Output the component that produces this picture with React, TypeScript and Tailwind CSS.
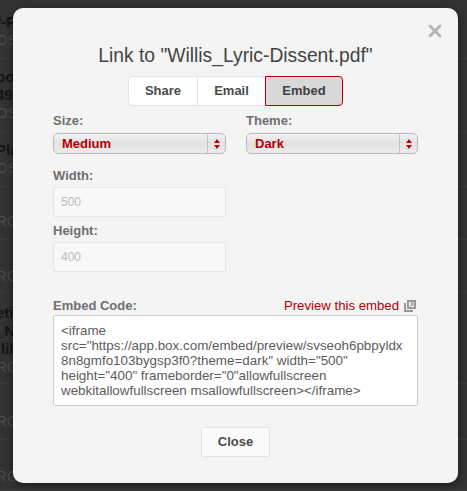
import { X } from "lucide-react";

const rows = [
  { box: "h-[59px] pb-[9px]", lines: ["f-P", "OS"], dark: [true, false] },
  { box: "h-[73px] pb-[9px]", lines: ["oo", "49", "OS"], dark: [true, true, false] },
  { box: "h-[55px] pb-[9px]", lines: ["Pla", "OS"], dark: [true, false] },
  { box: "h-[53px] pb-[9px]", lines: ["RO"], dark: [false] },
  { box: "h-[53px] pb-[7px]", lines: ["RO"], dark: [false] },
  { box: "h-[91px] pb-[7px]", lines: ["eti", "_N", "-lil", "RO"], dark: [true, true, true, false] },
  { box: "h-[56px] pb-[9px]", lines: ["RO"], dark: [false] },
  { box: "h-[51px] pb-[5px]", lines: ["RO"], dark: [false] },
];

function SelectBox({ value }: { value: string }) {
  return (
    <div className="flex h-[21px] w-full items-stretch rounded-[5px] border border-[#b9b9b9] bg-gradient-to-b from-[#f2f2f2] via-[#e2e2e2] to-[#ececec]">
      <span className="flex-1 pl-2 text-[13px] font-bold leading-[19px] text-[#b20000]">{value}</span>
      <span className="flex w-[18px] flex-col items-center justify-center gap-[2px] border-l border-[#c4c4c4]">
        <span className="h-0 w-0 border-x-[3px] border-b-[4px] border-x-transparent border-b-[#b20000]" />
        <span className="h-0 w-0 border-x-[3px] border-t-[4px] border-x-transparent border-t-[#b20000]" />
      </span>
    </div>
  );
}

function NumberField({ label, value }: { label: string; value: string }) {
  return (
    <div className="w-[173px]">
      <div className="text-[13px] font-bold leading-[17px] text-[#6f6f6f]">{label}</div>
      <div className="mt-[3px] h-[30px] rounded-[2px] border border-[#e6e6e6] bg-[#f8f8f8] pl-[7px] text-[12px] leading-[28px] text-[#bbbbbb]">
        {value}
      </div>
    </div>
  );
}

export default function App() {
  return (
    <div
      className="relative h-[491px] w-[467px] overflow-hidden bg-[#333333]"
      style={{ fontFamily: '"Liberation Sans", Arial, sans-serif' }}
    >
      {/* page behind the overlay */}
      <div className="flex flex-col">
        {rows.map((row, i) => (
          <div
            key={i}
            className={`flex flex-col justify-end border-b border-[#3b3b3b] text-[15px] leading-[18px] ${row.box}`}
          >
            {row.lines.map((line, j) => (
              <span key={j} className={row.dark[j] ? "-ml-1 font-bold text-[#151515]" : "-ml-1 text-[#4c4c4c]"}>
                {line}
              </span>
            ))}
          </div>
        ))}
      </div>

      {/* modal */}
      <div className="absolute left-[13px] top-[8px] flex h-[475px] w-[445px] flex-col rounded-[10px] bg-[#f4f4f4] px-10 shadow-[0_2px_8px_rgba(0,0,0,0.5)]">
        <button className="absolute right-[13px] top-[13px] text-[#b4b4b4]">
          <X size={20} strokeWidth={3.4} />
        </button>

        <h1 className="mt-[37px] whitespace-nowrap text-center text-[19.3px] leading-[22px] text-[#444444]">
          Link to "Willis_Lyric-Dissent.pdf"
        </h1>

        <div className="mt-[9px] flex h-[30px] justify-center text-[13px] font-bold leading-[28px] text-[#4a4a4a]">
          <div className="w-[70px] rounded-l-[4px] border border-[#e4e4e4] bg-white text-center">Share</div>
          <div className="w-[67px] border-y border-[#e4e4e4] bg-white text-center">Email</div>
          <div className="w-[78px] rounded-r-[4px] border border-[#b20000] bg-[#d8d8d8] text-center text-[#3f3f3f]">Embed</div>
        </div>

        <div className="mt-[6px] flex gap-5">
          <div className="w-[173px]">
            <div className="text-[13px] font-bold leading-[17px] text-[#6f6f6f]">Size:</div>
            <div className="mt-[4px]">
              <SelectBox value="Medium" />
            </div>
          </div>
          <div className="w-[172px]">
            <div className="text-[13px] font-bold leading-[17px] text-[#6f6f6f]">Theme:</div>
            <div className="mt-[4px]">
              <SelectBox value="Dark" />
            </div>
          </div>
        </div>

        <div className="mt-[13px] flex flex-col gap-[5px]">
          <NumberField label="Width:" value="500" />
          <NumberField label="Height:" value="400" />
        </div>

        <div className="mt-[25px] flex items-end justify-between">
          <div className="text-[13px] font-bold leading-[17px] text-[#6f6f6f]">Embed Code:</div>
          <div className="flex items-center gap-[5px] pr-[2px] text-[13.2px] leading-[17px] text-[#b20000]">
            Preview this embed
            <svg width="12" height="12" viewBox="0 0 12 12" className="text-[#999999]">
              <path d="M3 0h9v9H3zM5 2v5h5V2z" fill="currentColor" fillRule="evenodd" />
              <path d="M0 3h2v7h7v2H0z" fill="currentColor" />
              <path d="M6 2.500h3.500V6L8.400 4.900 6.600 6.700 5.800 5.900 7.600 4.100z" fill="currentColor" />
            </svg>
          </div>
        </div>

        <div className="mt-[1px] h-[91px] w-[365px] whitespace-nowrap rounded-[2px] border border-[#cccccc] bg-white py-[7px] pl-[7px] text-[13.4px] leading-[15px] text-[#5c5c5c]">
          {"<iframe"}
          <br />
          {'src="https://app.box.com/embed/preview/svseoh6pbpyldx'}
          <br />
          {'8n8gmfo103bygsp3f0?theme=dark" width="500"'}
          <br />
          {'height="400" frameborder="0"allowfullscreen'}
          <br />
          {"webkitallowfullscreen msallowfullscreen></iframe>"}
        </div>

        <div className="mt-[21px] flex justify-center">
          <button className="h-[30px] w-[69px] rounded-[2px] border border-[#e2e2e2] bg-[#fafafa] text-[13px] font-bold text-[#4a4a4a]">
            Close
          </button>
        </div>
      </div>
    </div>
  );
}
